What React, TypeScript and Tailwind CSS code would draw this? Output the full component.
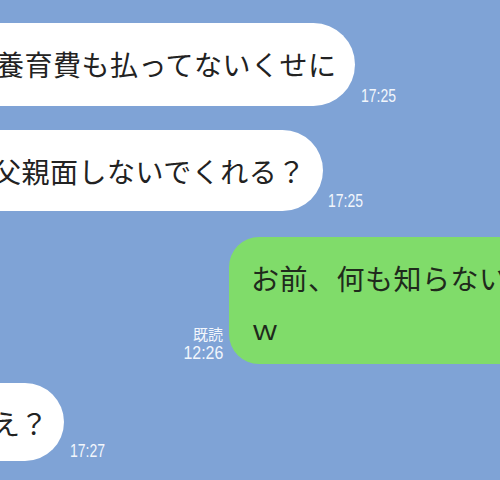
const jp = 'font-["Noto_Sans_CJK_JP",_"Noto_Sans",_sans-serif]';

interface TimeProps {
  time: string;
}

function Time({ time }: TimeProps) {
  return (
    <span className='mb-[1px] inline-block origin-left scale-x-[0.8] font-["Liberation_Sans",_sans-serif] text-[17.5px] leading-none text-[#f2f6fc]'>
      {time}
    </span>
  );
}

export default function App() {
  return (
    <div className={`flex h-[480px] w-[500px] flex-col overflow-hidden bg-[#7fa3d6] ${jp}`}>
      {/* incoming */}
      <div className="mt-[23px] flex items-end gap-[6px]">
        <div className="-ml-[44px] rounded-[42px] bg-white pb-[17px] pl-[40px] pr-[18px] pt-[16px] text-[28px] leading-[50px] tracking-[0.5px] whitespace-nowrap text-[#222]">
          養育費も払ってないくせに
        </div>
        <Time time="17:25" />
      </div>

      <div className="mt-[24px] flex items-end gap-[5px]">
        <div className="-ml-[47px] rounded-[42px] bg-white pb-[15px] pl-[40px] pr-[17px] pt-[16px] text-[28px] leading-[50px] tracking-[0.5px] whitespace-nowrap text-[#222]">
          父親面しないでくれる？
        </div>
        <Time time="17:25" />
      </div>

      {/* outgoing */}
      <div className="mt-[26px] flex items-end gap-[6px]">
        <div className="mb-[1px] flex w-[223px] shrink-0 flex-col items-end text-[#f2f6fc]">
          <span className="text-[15px] leading-[17px]">既読</span>
          <span className='mt-[1px] inline-block origin-right scale-x-[0.86] font-["Liberation_Sans",_sans-serif] text-[18.5px] leading-[20px]'>
            12:26
          </span>
        </div>
        <div className="w-[320px] shrink-0 rounded-[30px] bg-[#80dc6a] pb-[11px] pl-[22px] pt-[16px] text-[28px] leading-[50px] tracking-[0.5px] whitespace-nowrap text-[#1f2a1c]">
          お前、何も知らない
          <br />ｗ
        </div>
      </div>

      <div className="mt-[19px] flex items-end gap-[6px]">
        <div className="-ml-[48px] rounded-[40px] bg-white pb-[13px] pl-[40px] pr-[16px] pt-[15px] text-[28px] leading-[50px] whitespace-nowrap text-[#222]">
          え？
        </div>
        <Time time="17:27" />
      </div>
    </div>
  );
}
